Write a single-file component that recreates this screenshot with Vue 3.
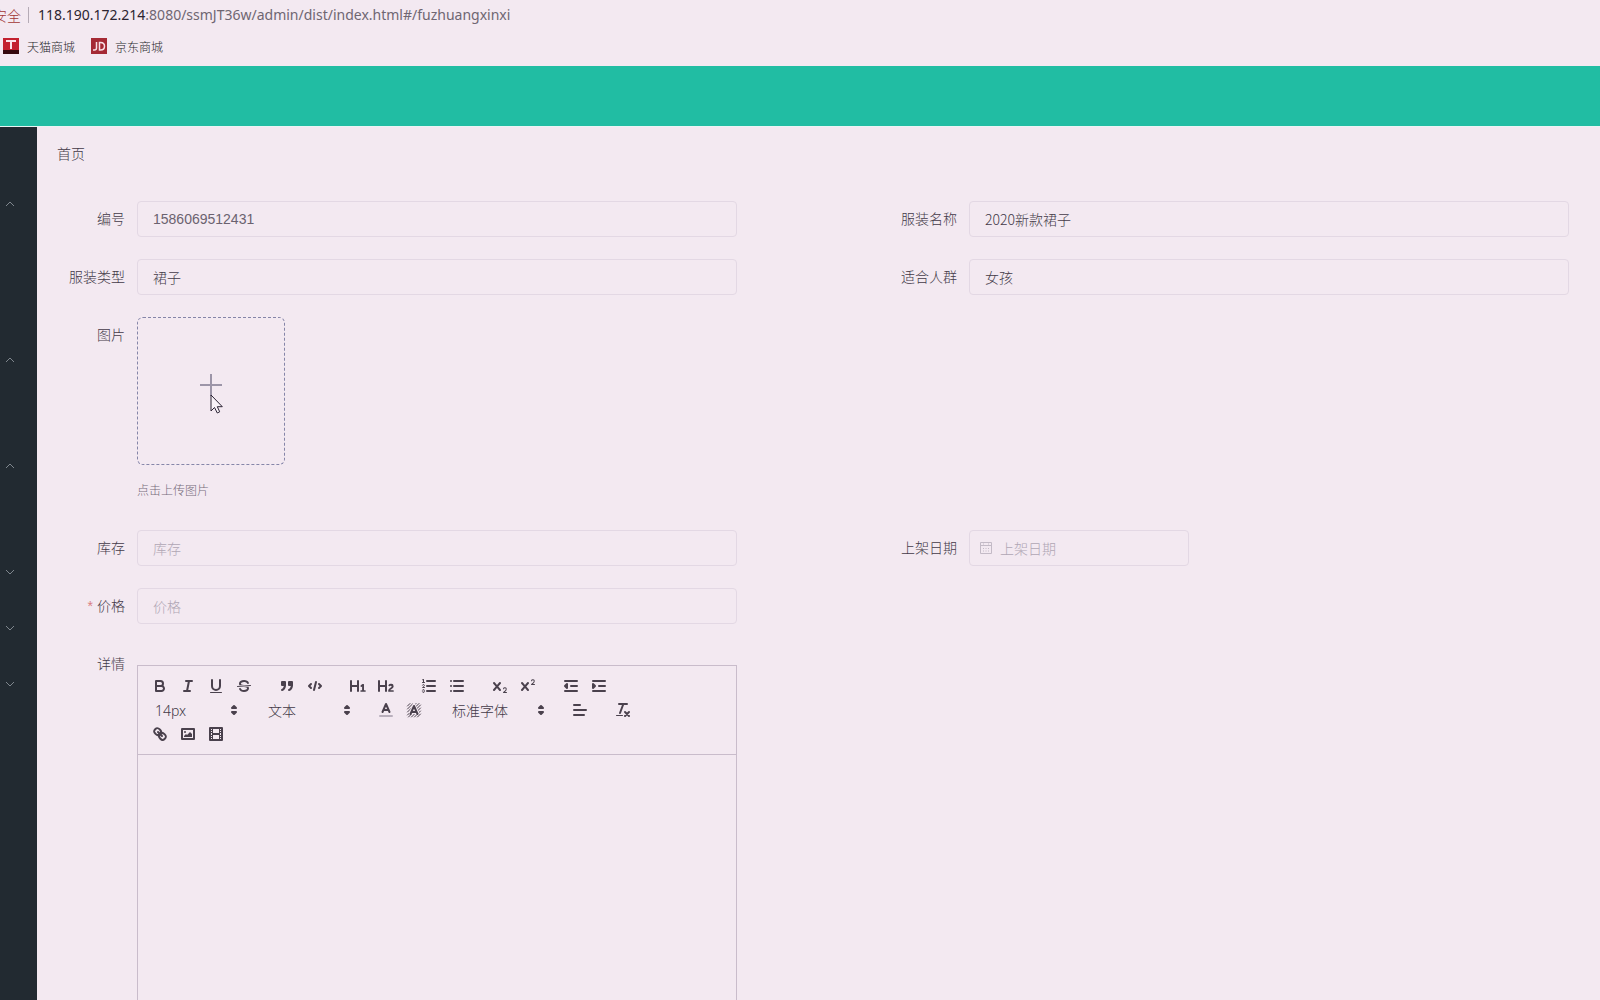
<script setup>
import { ref } from 'vue'

const address = { host: '118.190.172.214', rest: ':8080/ssmJT36w/admin/dist/index.html#/fuzhuangxinxi' }

// Side menu groups: open ones show an upward arrow above their children
const menu = [
  { open: true, children: 2 },
  { open: true, children: 1 },
  { open: true, children: 1 },
  { open: false, children: 0 },
  { open: false, children: 0 },
  { open: false, children: 0 }
]

const form = ref({
  code: '1586069512431',
  name: '2020新款裙子',
  type: '裙子',
  crowd: '女孩',
  stock: '',
  date: '',
  price: ''
})

const cross =
  '<path class="f" d="M9.65,5.241a1,1,0,0,0-1.409.108L6,7.964,3.759,5.349A1,1,0,0,0,2.192,6.59178Q2.21541,6.6213,2.241,6.649L4.684,9.5,2.241,12.35A1,1,0,0,0,3.71,13.70722q0.02557-.02768.049-0.05722L6,11.036,8.241,13.65a1,1,0,1,0,1.567-1.24277Q9.78459,12.3777,9.759,12.35L7.316,9.5,9.759,6.651A1,1,0,0,0,9.65,5.241Z"/>'

const icons = {
  bold: '<path class="s" d="M5,4H9.5A2.5,2.5,0,0,1,12,6.5v0A2.5,2.5,0,0,1,9.5,9H5V4Z"/><path class="s" d="M5,9h5.5A2.5,2.5,0,0,1,13,11.5v0A2.5,2.5,0,0,1,10.5,14H5V9Z"/>',
  italic: '<path class="s" d="M7,4H13M5,14H11M8,14L10,4"/>',
  underline: '<path class="s" d="M5,3V9a4.012,4.012,0,0,0,4,4H9a4.012,4.012,0,0,0,4-4V3"/><rect class="f" height="1" rx="0.5" width="12" x="3" y="15"/>',
  strike: '<path class="s t" d="M15.5,8.5L2.5,9.5"/><path class="f" d="M9.007,8C6.542,7.791,6,7.519,6,6.5,6,5.792,7.283,5,9,5c1.571,0,2.765.679,2.969,1.309a1,1,0,0,0,1.9-.617C13.356,4.106,11.354,3,9,3,6.2,3,4,4.538,4,6.5a3.2,3.2,0,0,0,.5,1.843Z"/><path class="f" d="M8.984,10C11.457,10.208,12,10.479,12,11.5c0,0.708-1.283,1.5-3,1.5-1.571,0-2.765-.679-2.969-1.309a1,1,0,1,0-1.9.617C4.644,13.894,6.646,15,9,15c2.8,0,5-1.538,5-3.5a3.2,3.2,0,0,0-.5-1.843Z"/>',
  quote: '<rect class="s f" height="3" width="3" x="4" y="5"/><rect class="s f" height="3" width="3" x="11" y="5"/><path class="s f" d="M7,8c0,4.031-3,5-3,5"/><path class="s f" d="M14,8c0,4.031-3,5-3,5"/>',
  code: '<path class="s" d="M5,7L3,9L5,11M13,7L15,9L13,11M10,5L8,13"/>',
  h1: '<path class="f" d="M10,4V14a1,1,0,0,1-2,0V10H3v4a1,1,0,0,1-2,0V4A1,1,0,0,1,3,4V8H8V4a1,1,0,0,1,2,0Zm6.06787,9.209H14.98975V7.59863a.54085.54085,0,0,0-.605-.60547h-.62744a1.01119,1.01119,0,0,0-.748.29688L11.645,8.56641a.5435.5435,0,0,0-.022.8584l.28613.30762a.53861.53861,0,0,0,.84717.0332l.09912-.08789a1.2137,1.2137,0,0,0,.2417-.35254h.02246s-.01123.30859-.01123.60547V13.209H12.041a.54085.54085,0,0,0-.605.60547v.43945a.54085.54085,0,0,0,.605.60547h4.02686a.54085.54085,0,0,0,.605-.60547v-.43945A.54085.54085,0,0,0,16.06787,13.209Z"/>',
  h2: '<path class="f" d="M16.73975,13.81445v.43945a.54085.54085,0,0,1-.605.60547H11.855a.58392.58392,0,0,1-.64893-.60547V14.0127c0-2.90527,3.39941-3.42187,3.39941-4.55469a.77675.77675,0,0,0-.84717-.78125,1.17684,1.17684,0,0,0-.83594.38477c-.2749.26367-.561.374-.85791.13184l-.4292-.34082c-.30811-.24219-.38525-.51758-.1543-.81445a2.97155,2.97155,0,0,1,2.45361-1.17676,2.45393,2.45393,0,0,1,2.68408,2.40918c0,2.45312-3.1792,2.92676-3.27832,3.93848h2.79443A.54085.54085,0,0,1,16.73975,13.81445ZM9,3A.99974.99974,0,0,0,8,4V8H3V4A1,1,0,0,0,1,4V14a1,1,0,0,0,2,0V10H8v4a1,1,0,0,0,2,0V4A.99974.99974,0,0,0,9,3Z"/>',
  ordered: '<path class="s" d="M7,4H15M7,9H15M7,14H15"/><path class="s t" d="M2.5,5.5H4.5"/><path class="f" d="M3.5,6A0.5,0.5,0,0,1,3,5.5V3.085l-0.276.138A0.5,0.5,0,0,1,2.053,3c-0.124-.247-0.023-0.324.224-0.447l1-.5A0.5,0.5,0,0,1,4,2.5v3A0.5,0.5,0,0,1,3.5,6Z"/><path class="s t" d="M4.5,10.5h-2c0-.234,1.85-1.076,1.85-2.234A0.959,0.959,0,0,0,2.5,8.156"/><path class="s t" d="M2.5,14.846a0.959,0.959,0,0,0,1.85-.109A0.7,0.7,0,0,0,3.75,14a0.688,0.688,0,0,0,.6-0.736,0.959,0.959,0,0,0-1.85-.109"/>',
  bullet: '<path class="s" d="M6,4H15M6,9H15M6,14H15M3,4H3M3,9H3M3,14H3"/>',
  sub: '<path class="f" d="M15.5,15H13.861a3.858,3.858,0,0,0,1.914-2.975,1.8,1.8,0,0,0-1.6-1.751A1.921,1.921,0,0,0,12.021,11.7a0.50013,0.50013,0,1,0,.957.291h0a0.914,0.914,0,0,1,1.053-.725,0.81,0.81,0,0,1,.744.762c0,1.076-1.16971,1.86982-1.93971,2.43082A1.45639,1.45639,0,0,0,12,15.5a0.5,0.5,0,0,0,.5.5h3A0.5,0.5,0,0,0,15.5,15Z"/>' + cross,
  sup: '<path class="f" d="M15.5,7H13.861a4.015,4.015,0,0,0,1.914-2.975,1.8,1.8,0,0,0-1.6-1.751A1.922,1.922,0,0,0,12.021,3.7a0.5,0.5,0,1,0,.957.291,0.917,0.917,0,0,1,1.053-.725,0.81,0.81,0,0,1,.744.762c0,1.077-1.164,1.925-1.934,2.486A1.423,1.423,0,0,0,12,7.5a0.5,0.5,0,0,0,.5.5h3A0.5,0.5,0,0,0,15.5,7Z"/>' + cross,
  outdent: '<path class="s" d="M3,14H15M3,4H15M9,9H15"/><path class="s f" d="M5,7V11L3,9L5,7"/>',
  indent: '<path class="s" d="M3,14H15M3,4H15M9,9H15"/><path class="s f" d="M3,7V11L5,9L3,7"/>',
  color: '<path class="s pale" d="M3,15H15"/><path class="s" d="M5.5,11L9,3L12.5,11M11.63,9H6.38"/>',
  background: '<path class="s t" d="M2.5,5L5,2.5M2.5,8L8,2.5M2.5,11L11,2.5M2.5,14L14,2.5M3.5,16L15.5,4M6.5,16L15.5,7M9.5,16L15.5,10M12.5,16L15.5,13"/><path class="halo" d="M5.5,13L9,5L12.5,13M11.63,11H6.38"/><path class="s" d="M5.5,13L9,5L12.5,13M11.63,11H6.38"/>',
  align: '<path class="s" d="M3,9H15M3,14H13M3,4H9"/>',
  clean: '<path class="s" d="M5,3H13M6,12L9.35,3M11,11L15,15M15,11L11,15"/><rect class="f" height="1" rx="0.5" width="7" x="2" y="14"/>',
  link: '<path class="s" d="M7,7L11,11"/><path class="s" d="M8.9,4.577a3.476,3.476,0,0,1,.36,4.679A3.476,3.476,0,0,1,4.577,8.9C3.185,7.5,2.035,6.4,4.217,4.217S7.5,3.185,8.9,4.577Z"/><path class="s" d="M13.423,9.1a3.476,3.476,0,0,0-4.679-.36,3.476,3.476,0,0,0,.36,4.679c1.392,1.392,2.5,2.542,4.679.36S14.815,10.5,13.423,9.1Z"/>',
  image: '<rect class="s" height="10" width="12" x="3" y="4"/><circle class="f" cx="6" cy="7" r="1"/><path class="f" d="M5,12V11L7,9L8,10L11,7L13,9V12Z"/>',
  video: '<rect class="s" height="12" width="12" x="3" y="3"/><path class="f" d="M5,3h1v12h-1zM12,3h1v12h-1zM5,8h8v2h-8zM3,5h3v1h-3zM3,7h3v1h-3zM3,10h3v1h-3zM3,12h3v1h-3zM12,5h3v1h-3zM12,7h3v1h-3zM12,10h3v1h-3zM12,12h3v1h-3z"/>',
  updown: '<path class="s f" d="M7,11L9,13L11,11ZM7,7L9,5L11,7Z"/>'
}

const toolbar = [
  ['bold', 'italic', 'underline', 'strike'],
  ['quote', 'code'],
  ['h1', 'h2'],
  ['ordered', 'bullet'],
  ['sub', 'sup'],
  ['outdent', 'indent'],
  [{ select: '14px', label: '字号' }],
  [{ select: '文本', label: '标题' }],
  ['color', 'background'],
  [{ select: '标准字体', label: '字体', wide: true }],
  ['align'],
  ['clean'],
  ['link', 'image', 'video']
]
</script>

<template>
  <div class="window">
    <header class="browser">
      <div class="address">
        <span class="warning">安全</span>
        <span class="divider"></span>
        <span class="url"><b>{{ address.host }}</b>{{ address.rest }}</span>
      </div>
      <nav class="bookmarks">
        <a href="#tmall">
          <svg width="16" height="16" viewBox="0 0 16 16"><path fill="#c3202f" d="M0 0h16v16H0z" /><path fill="#35090e" d="M0 12h16v4H0z" /><path stroke="#fbe3ea" stroke-width="2" fill="none" d="M3 3h10M8 3v8" /></svg>
          <span>天猫商城</span>
        </a>
        <a href="#jd">
          <svg width="16" height="16" viewBox="0 0 16 16"><path fill="#a52a35" d="M0 0h16v16H0z" /><path stroke="#f8dfe5" stroke-width="1.5" fill="none" d="M5.500 4v6q0 2-2 2H2M8.500 4.500v7.500h1q4 0 4-3.750t-4-3.750z" /></svg>
          <span>京东商城</span>
        </a>
      </nav>
    </header>

    <div class="banner"></div>

    <div class="shell">
      <aside class="side">
        <div v-for="(group, i) in menu" :key="i" class="group">
          <button type="button" class="fold" :aria-label="group.open ? '收起' : '展开'">
            <svg width="12" height="12" viewBox="0 0 12 12"><path :d="group.open ? 'M2 8L6 4L10 8' : 'M2 4L6 8L10 4'" /></svg>
          </button>
          <div v-for="n in group.children" :key="n" class="child"></div>
        </div>
      </aside>

      <main class="main">
        <div class="crumb">首页</div>
        <form class="form" @submit.prevent>
          <div class="item">
            <label for="code">编号</label>
            <input id="code" v-model="form.code" class="digits" type="text" />
          </div>
          <div class="item">
            <label for="name">服装名称</label>
            <input id="name" v-model="form.name" type="text" />
          </div>
          <div class="item">
            <label for="type">服装类型</label>
            <input id="type" v-model="form.type" type="text" />
          </div>
          <div class="item">
            <label for="crowd">适合人群</label>
            <input id="crowd" v-model="form.crowd" type="text" />
          </div>
          <div class="item full">
            <label for="upload">图片</label>
            <div>
              <button id="upload" type="button" class="upload" aria-label="上传图片">
                <svg class="plus" width="22" height="22" viewBox="0 0 22 22"><path d="M11 0V22M0 11H22" /></svg>
                <svg class="pointer" width="14" height="21" viewBox="0 0 14 21"><path d="M1 1V17L4.500 13.500L7.300 19L9.700 17.800L7.300 12.700H12.300Z" /></svg>
              </button>
              <div class="tip">点击上传图片</div>
            </div>
          </div>
          <div class="item">
            <label for="stock">库存</label>
            <input id="stock" v-model="form.stock" type="text" placeholder="库存" />
          </div>
          <div class="item">
            <label for="date">上架日期</label>
            <div class="date">
              <svg width="14" height="14" viewBox="0 0 14 14"><path d="M1.500 1.500h11v11h-11zM1.500 4.500h11M4 3h1M9 3h1M4 7.500h1M6.500 7.500h1M9 7.500h1M4 10h1M6.500 10h1M9 10h1" /></svg>
              <input id="date" v-model="form.date" type="text" placeholder="上架日期" />
            </div>
          </div>
          <div class="item start">
            <label for="price" class="required">价格</label>
            <input id="price" v-model="form.price" type="text" placeholder="价格" />
          </div>
          <div class="item start">
            <label id="detail-label">详情</label>
            <div class="editor">
              <div class="toolbar">
                <span v-for="(set, i) in toolbar" :key="i" class="set">
                  <template v-for="(tool, j) in set" :key="j">
                    <span v-if="tool.select" class="picker" :class="{ wide: tool.wide }">
                      <select :aria-label="tool.label"><option>{{ tool.select }}</option></select>
                      <svg class="icon" viewBox="0 0 18 18" v-html="icons.updown"></svg>
                    </span>
                    <button v-else type="button" class="tool" :aria-label="tool">
                      <svg class="icon" viewBox="0 0 18 18" v-html="icons[tool]"></svg>
                    </button>
                  </template>
                </span>
              </div>
              <div class="content" contenteditable="true" role="textbox" aria-labelledby="detail-label"></div>
            </div>
          </div>
        </form>
      </main>
    </div>
  </div>
</template>

<style>
body {
  margin: 0;
  background: #f3e9f1;
}
</style>

<style scoped>
* {
  box-sizing: border-box;
}
.window {
  display: flex;
  flex-direction: column;
  height: 100vh;
  overflow: hidden;
  background: #f3e9f1;
  color: #433a48;
  font: 300 14px "Liberation Sans", "Noto Sans CJK SC", sans-serif;
}
button,
input,
select {
  font: inherit;
  color: inherit;
  margin: 0;
}
.browser {
  flex: none;
  height: 66px;
}
.address {
  display: flex;
  align-items: center;
  height: 29px;
}
.warning {
  display: flex;
  justify-content: flex-end;
  width: 21px;
  overflow: hidden;
  white-space: nowrap;
  color: #a23634;
}
.divider {
  width: 1px;
  height: 16px;
  margin: 0 9px 0 7px;
  background: #b5abb6;
}
.url {
  font: 14px "Noto Sans", "Open Sans", sans-serif;
  color: #6f6672;
}
.url b {
  font-weight: 400;
  color: #2c2430;
}
.bookmarks {
  display: flex;
  gap: 16px;
  height: 34px;
  padding-left: 3px;
}
.bookmarks a {
  display: flex;
  align-items: center;
  gap: 8px;
  font-size: 12px;
  color: #261e2a;
  text-decoration: none;
}
.banner {
  flex: none;
  height: 61px;
  background: #21bda3;
  border-bottom: 1px solid #e9f5f4;
}
.shell {
  display: flex;
  flex: 1;
  min-height: 0;
}
.side {
  flex: none;
  width: 37px;
  padding-top: 49px;
  background: #222a31;
}
.fold {
  display: flex;
  align-items: center;
  width: 100%;
  height: 56px;
  padding: 0 0 0 4px;
  border: 0;
  background: none;
}
.fold path {
  fill: none;
  stroke: #7f868d;
}
.child {
  height: 50px;
}
.main {
  flex: 1;
  min-width: 0;
  padding: 0 31px 0 20px;
  overflow-y: auto;
  scrollbar-width: none;
}
.crumb {
  height: 54px;
  line-height: 54px;
}
.form {
  display: grid;
  grid-template-columns: 1fr 1fr;
  gap: 22px 152px;
  padding-top: 20px;
}
.item {
  display: grid;
  grid-template-columns: 80px minmax(0, 1fr);
  align-items: start;
}
.full {
  grid-column: 1 / -1;
}
.start {
  grid-column: 1;
}
.item label {
  padding-right: 12px;
  line-height: 36px;
  text-align: right;
  white-space: nowrap;
}
.required::before {
  content: "*";
  margin-right: 4px;
  color: #d98083;
}
.item input {
  width: 100%;
  height: 36px;
  padding: 0 15px;
  border: 1px solid #e3d8e4;
  border-radius: 4px;
  background: none;
  outline: none;
  font-family: "Noto Sans CJK SC", sans-serif;
}
.item .digits {
  font-family: "Liberation Sans", sans-serif;
  color: #6b626f;
}
.item input::placeholder {
  color: #b0a6b4;
  opacity: 1;
}
.upload {
  position: relative;
  display: flex;
  align-items: center;
  justify-content: center;
  width: 148px;
  height: 148px;
  padding: 0 0 12px;
  border: 1px dashed #8585a8;
  border-radius: 6px;
  background: none;
}
.plus path {
  stroke: #9c95a8;
  stroke-width: 2;
}
.pointer {
  position: absolute;
  left: 72px;
  top: 76px;
}
.pointer path {
  fill: #f8f2f8;
  stroke: #2a2233;
}
.tip {
  padding-top: 9px;
  font-size: 12px;
  line-height: 34px;
  color: #756b7a;
}
.date {
  position: relative;
  width: 220px;
}
.date svg {
  position: absolute;
  left: 10px;
  top: 11px;
}
.date input {
  padding-left: 30px;
}
.date path {
  fill: none;
  stroke: #c3bac6;
}
.editor {
  margin-top: 19px;
  border: 1px solid #c9bccb;
}
.toolbar {
  display: flex;
  flex-wrap: wrap;
  padding: 8px;
  border-bottom: 1px solid #c9bccb;
}
.set {
  display: flex;
  height: 24px;
  margin-right: 15px;
}
.tool {
  display: flex;
  align-items: center;
  width: 28px;
  height: 24px;
  padding: 0 5px;
  border: 0;
  background: none;
}
.icon {
  flex: none;
  width: 18px;
  height: 18px;
}
.icon :deep(.s) {
  fill: none;
  stroke: #4a414d;
  stroke-width: 2;
  stroke-linecap: round;
  stroke-linejoin: round;
}
.icon :deep(.f) {
  fill: #4a414d;
}
.icon :deep(.t) {
  stroke-width: 1;
}
.icon :deep(.pale) {
  stroke: #b9afbc;
}
.icon :deep(.halo) {
  fill: none;
  stroke: #f3e9f1;
  stroke-width: 4;
}
.picker {
  position: relative;
  display: flex;
  align-items: center;
  width: 98px;
}
.wide {
  width: 108px;
}
.picker select {
  width: 100%;
  height: 24px;
  padding: 0 0 0 9px;
  border: 0;
  background: none;
  appearance: none;
  font-family: "Noto Sans", "Noto Sans CJK SC", sans-serif;
}
.picker .icon {
  position: absolute;
  right: 1px;
  top: 3px;
  pointer-events: none;
}
.content {
  height: 400px;
  outline: none;
}
</style>
